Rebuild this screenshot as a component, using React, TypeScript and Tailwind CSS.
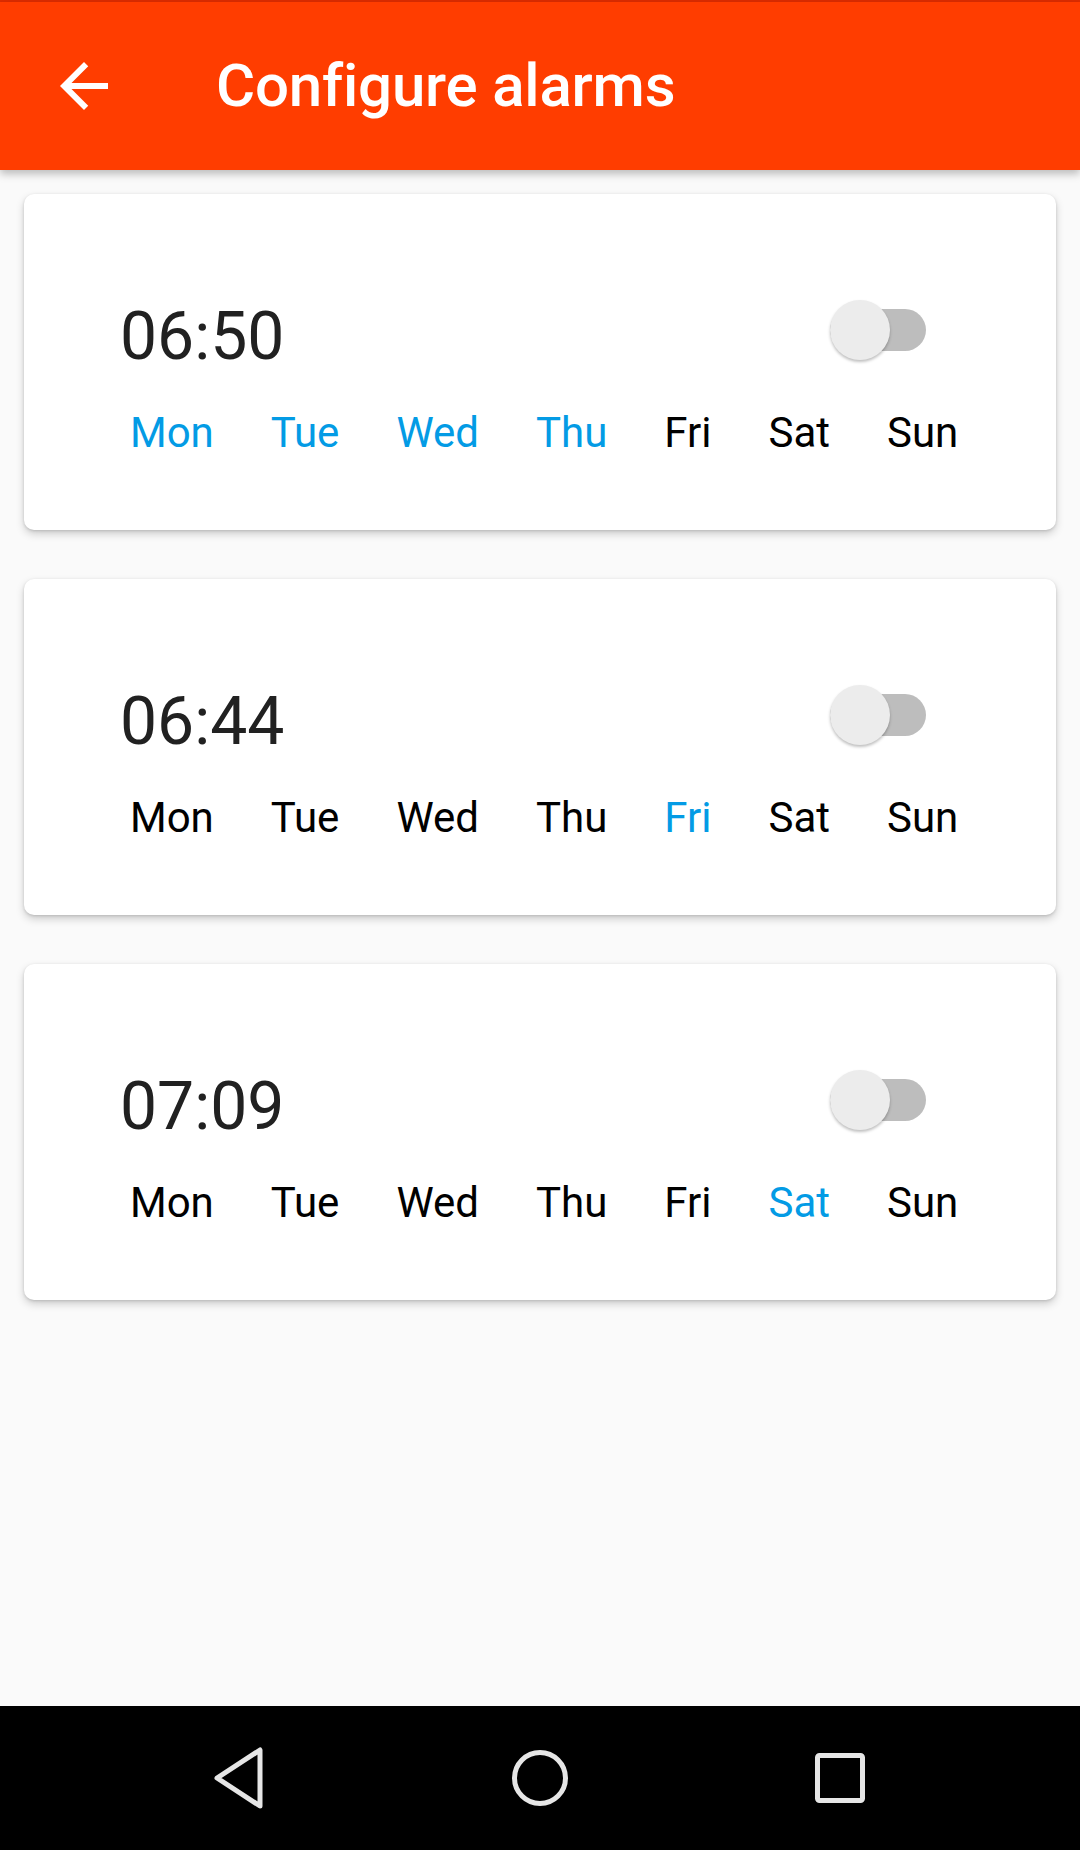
import React from 'react'

type Alarm = {
  time: string
  days: boolean[]
}

const DAYS = ['Mon', 'Tue', 'Wed', 'Thu', 'Fri', 'Sat', 'Sun']

const alarms: Alarm[] = [
  { time: '06:50', days: [true, true, true, true, false, false, false] },
  { time: '06:44', days: [false, false, false, false, true, false, false] },
  { time: '07:09', days: [false, false, false, false, false, true, false] },
]

function Switch() {
  return (
    <div className="relative w-[96px] h-[60px] -mt-[4px]">
      <div className="absolute left-0 right-0 top-[9px] h-[42px] rounded-full bg-[#bdbdbd]" />
      <div className="absolute left-0 top-0 w-[60px] h-[60px] rounded-full bg-[#ececec] shadow-[0_2px_3px_rgba(0,0,0,0.25)]" />
    </div>
  )
}

function AlarmCard({ alarm }: { alarm: Alarm }) {
  return (
    <div className="h-[336px] bg-white rounded-[10px] shadow-[0_4px_8px_rgba(0,0,0,0.18),0_1px_3px_rgba(0,0,0,0.14)] pl-[96px] pr-[130px] pt-[110px]">
      <div className="flex justify-between items-start">
        <div className="text-[66px] leading-none text-[#212121]">{alarm.time}</div>
        <Switch />
      </div>
      <div className="flex gap-[57px] mt-[42px] pl-[10px] text-[42px] leading-none">
        {DAYS.map((d, i) => (
          <span key={d} className={alarm.days[i] ? 'text-[#039be5]' : 'text-black'}>
            {d}
          </span>
        ))}
      </div>
    </div>
  )
}

export default function App() {
  return (
    <div className="w-[1080px] h-[1850px] flex flex-col bg-[#fafafa] font-['Roboto',sans-serif]">
      <div className="h-[2px] bg-[#dd2c00]" />
      <header className="relative z-10 h-[168px] bg-[#ff3d00] flex items-center shadow-[0_4px_8px_rgba(0,0,0,0.25)]">
        <svg viewBox="0 0 24 24" className="w-[72px] h-[72px] ml-[48px]" fill="white">
          <path d="M20 11H7.83l5.59-5.59L12 4l-8 8 8 8 1.41-1.41L7.83 13H20v-2z" />
        </svg>
        <h1 className="ml-[96px] text-[60px] font-medium text-white leading-none tracking-[-0.2px]">Configure alarms</h1>
      </header>

      <main className="flex-1 flex flex-col gap-[49px] px-[24px] pt-[24px]">
        {alarms.map((a) => (
          <AlarmCard key={a.time} alarm={a} />
        ))}
      </main>

      <nav className="h-[144px] bg-black flex justify-center items-center">
        <div className="w-[300px] flex justify-center">
          <svg width="52" height="62" viewBox="0 0 52 62" fill="none" stroke="#e6e6e6" strokeWidth="5" strokeLinejoin="round">
            <path d="M46 3 L46 59 L3 31 Z" />
          </svg>
        </div>
        <div className="w-[300px] flex justify-center">
          <svg width="58" height="58" viewBox="0 0 58 58" fill="none" stroke="#e6e6e6" strokeWidth="5">
            <circle cx="29" cy="29" r="25.5" />
          </svg>
        </div>
        <div className="w-[300px] flex justify-center">
          <svg width="50" height="50" viewBox="0 0 50 50" fill="none" stroke="#e6e6e6" strokeWidth="5">
            <rect x="2.5" y="2.5" width="45" height="45" rx="2" />
          </svg>
        </div>
      </nav>
    </div>
  )
}
